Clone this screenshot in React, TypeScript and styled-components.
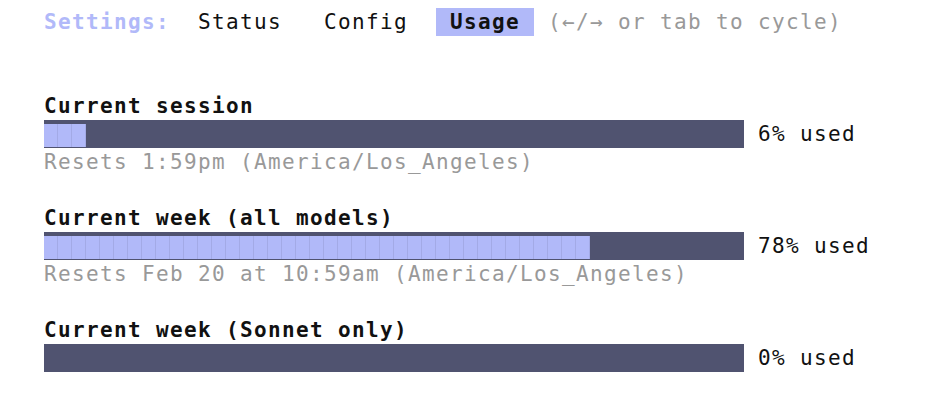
import React from "react";
import styled, { createGlobalStyle } from "styled-components";

const CELL = 14;
const BAR_CELLS = 50;
const FONT = 21;

const Global = createGlobalStyle`
  html, body { margin: 0; padding: 0; background: #ffffff; }
  body {
    font-family: "DejaVu Sans Mono", "Liberation Mono", monospace;
    -webkit-font-smoothing: antialiased;
  }
`;

const Screen = styled.div`
  padding: 8px 2px;
  font-family: "DejaVu Sans Mono", "Liberation Mono", monospace;
  font-size: ${FONT}px;
  line-height: 28px;
  letter-spacing: ${CELL - FONT * 0.602}px;
  color: #111111;
  white-space: pre;
`;

const Line = styled.div`
  height: 28px;
  display: flex;
  align-items: center;
`;

const Indent = styled.span`
  display: inline-block;
  width: ${3 * CELL}px;
  flex: none;
`;

const Heading = styled.span`
  color: #b1b9f9;
  font-weight: bold;
`;

const Tab = styled.span<{ $active?: boolean }>`
  height: 28px;
  display: inline-flex;
  align-items: center;
  background: ${(p) => (p.$active ? "#b1b9f9" : "transparent")};
  font-weight: ${(p) => (p.$active ? "bold" : "normal")};
  color: #111111;
`;

const Hint = styled.span`
  color: #999999;
`;

const Blank = styled.div`
  height: 28px;
`;

const Section = styled.section`
  display: flex;
  flex-direction: column;
  margin-bottom: 28px;
`;

const Title = styled.span`
  font-weight: bold;
  color: #111111;
`;

const Muted = styled.span`
  color: #999999;
`;

const Track = styled.div`
  width: ${BAR_CELLS * CELL}px;
  height: 28px;
  box-sizing: border-box;
  padding: 4px 0 1px;
  background: #505370;
  display: flex;
  flex: none;
`;

const Fill = styled.div`
  height: 100%;
  background-color: #b1b9f9;
  background-image: repeating-linear-gradient(
    to right,
    #b1b9f9 0px,
    #b1b9f9 ${CELL - 1}px,
    #a3aae6 ${CELL - 1}px,
    #a3aae6 ${CELL}px
  );
`;

const UsedLabel = styled.span`
  margin-left: ${CELL}px;
  color: #111111;
`;

type Usage = { title: string; pct: number; resets?: string };

const usages: Usage[] = [
  { title: "Current session", pct: 6, resets: "Resets 1:59pm (America/Los_Angeles)" },
  { title: "Current week (all models)", pct: 78, resets: "Resets Feb 20 at 10:59am (America/Los_Angeles)" },
  { title: "Current week (Sonnet only)", pct: 0 },
];

function UsageBlock({ u }: { u: Usage }) {
  const cells = Math.round((u.pct / 100) * BAR_CELLS);
  return (
    <Section>
      <Line>
        <Indent />
        <Title>{u.title}</Title>
      </Line>
      <Line>
        <Indent />
        <Track>
          {cells > 0 && <Fill style={{ width: cells * CELL }} />}
        </Track>
        <UsedLabel>{`${u.pct}% used`}</UsedLabel>
      </Line>
      {u.resets && (
        <Line>
          <Indent />
          <Muted>{u.resets}</Muted>
        </Line>
      )}
    </Section>
  );
}

export default function App() {
  return (
    <>
      <Global />
      <Screen>
        <Line>
          <Indent />
          <Heading>Settings:</Heading>
          <Tab>{"  Status   Config  "}</Tab>
          <Tab $active>{" Usage "}</Tab>
          <Hint>{" (←/→ or tab to cycle)"}</Hint>
        </Line>
        <Blank />
        <Blank />
        {usages.map((u) => (
          <UsageBlock key={u.title} u={u} />
        ))}
      </Screen>
    </>
  );
}
